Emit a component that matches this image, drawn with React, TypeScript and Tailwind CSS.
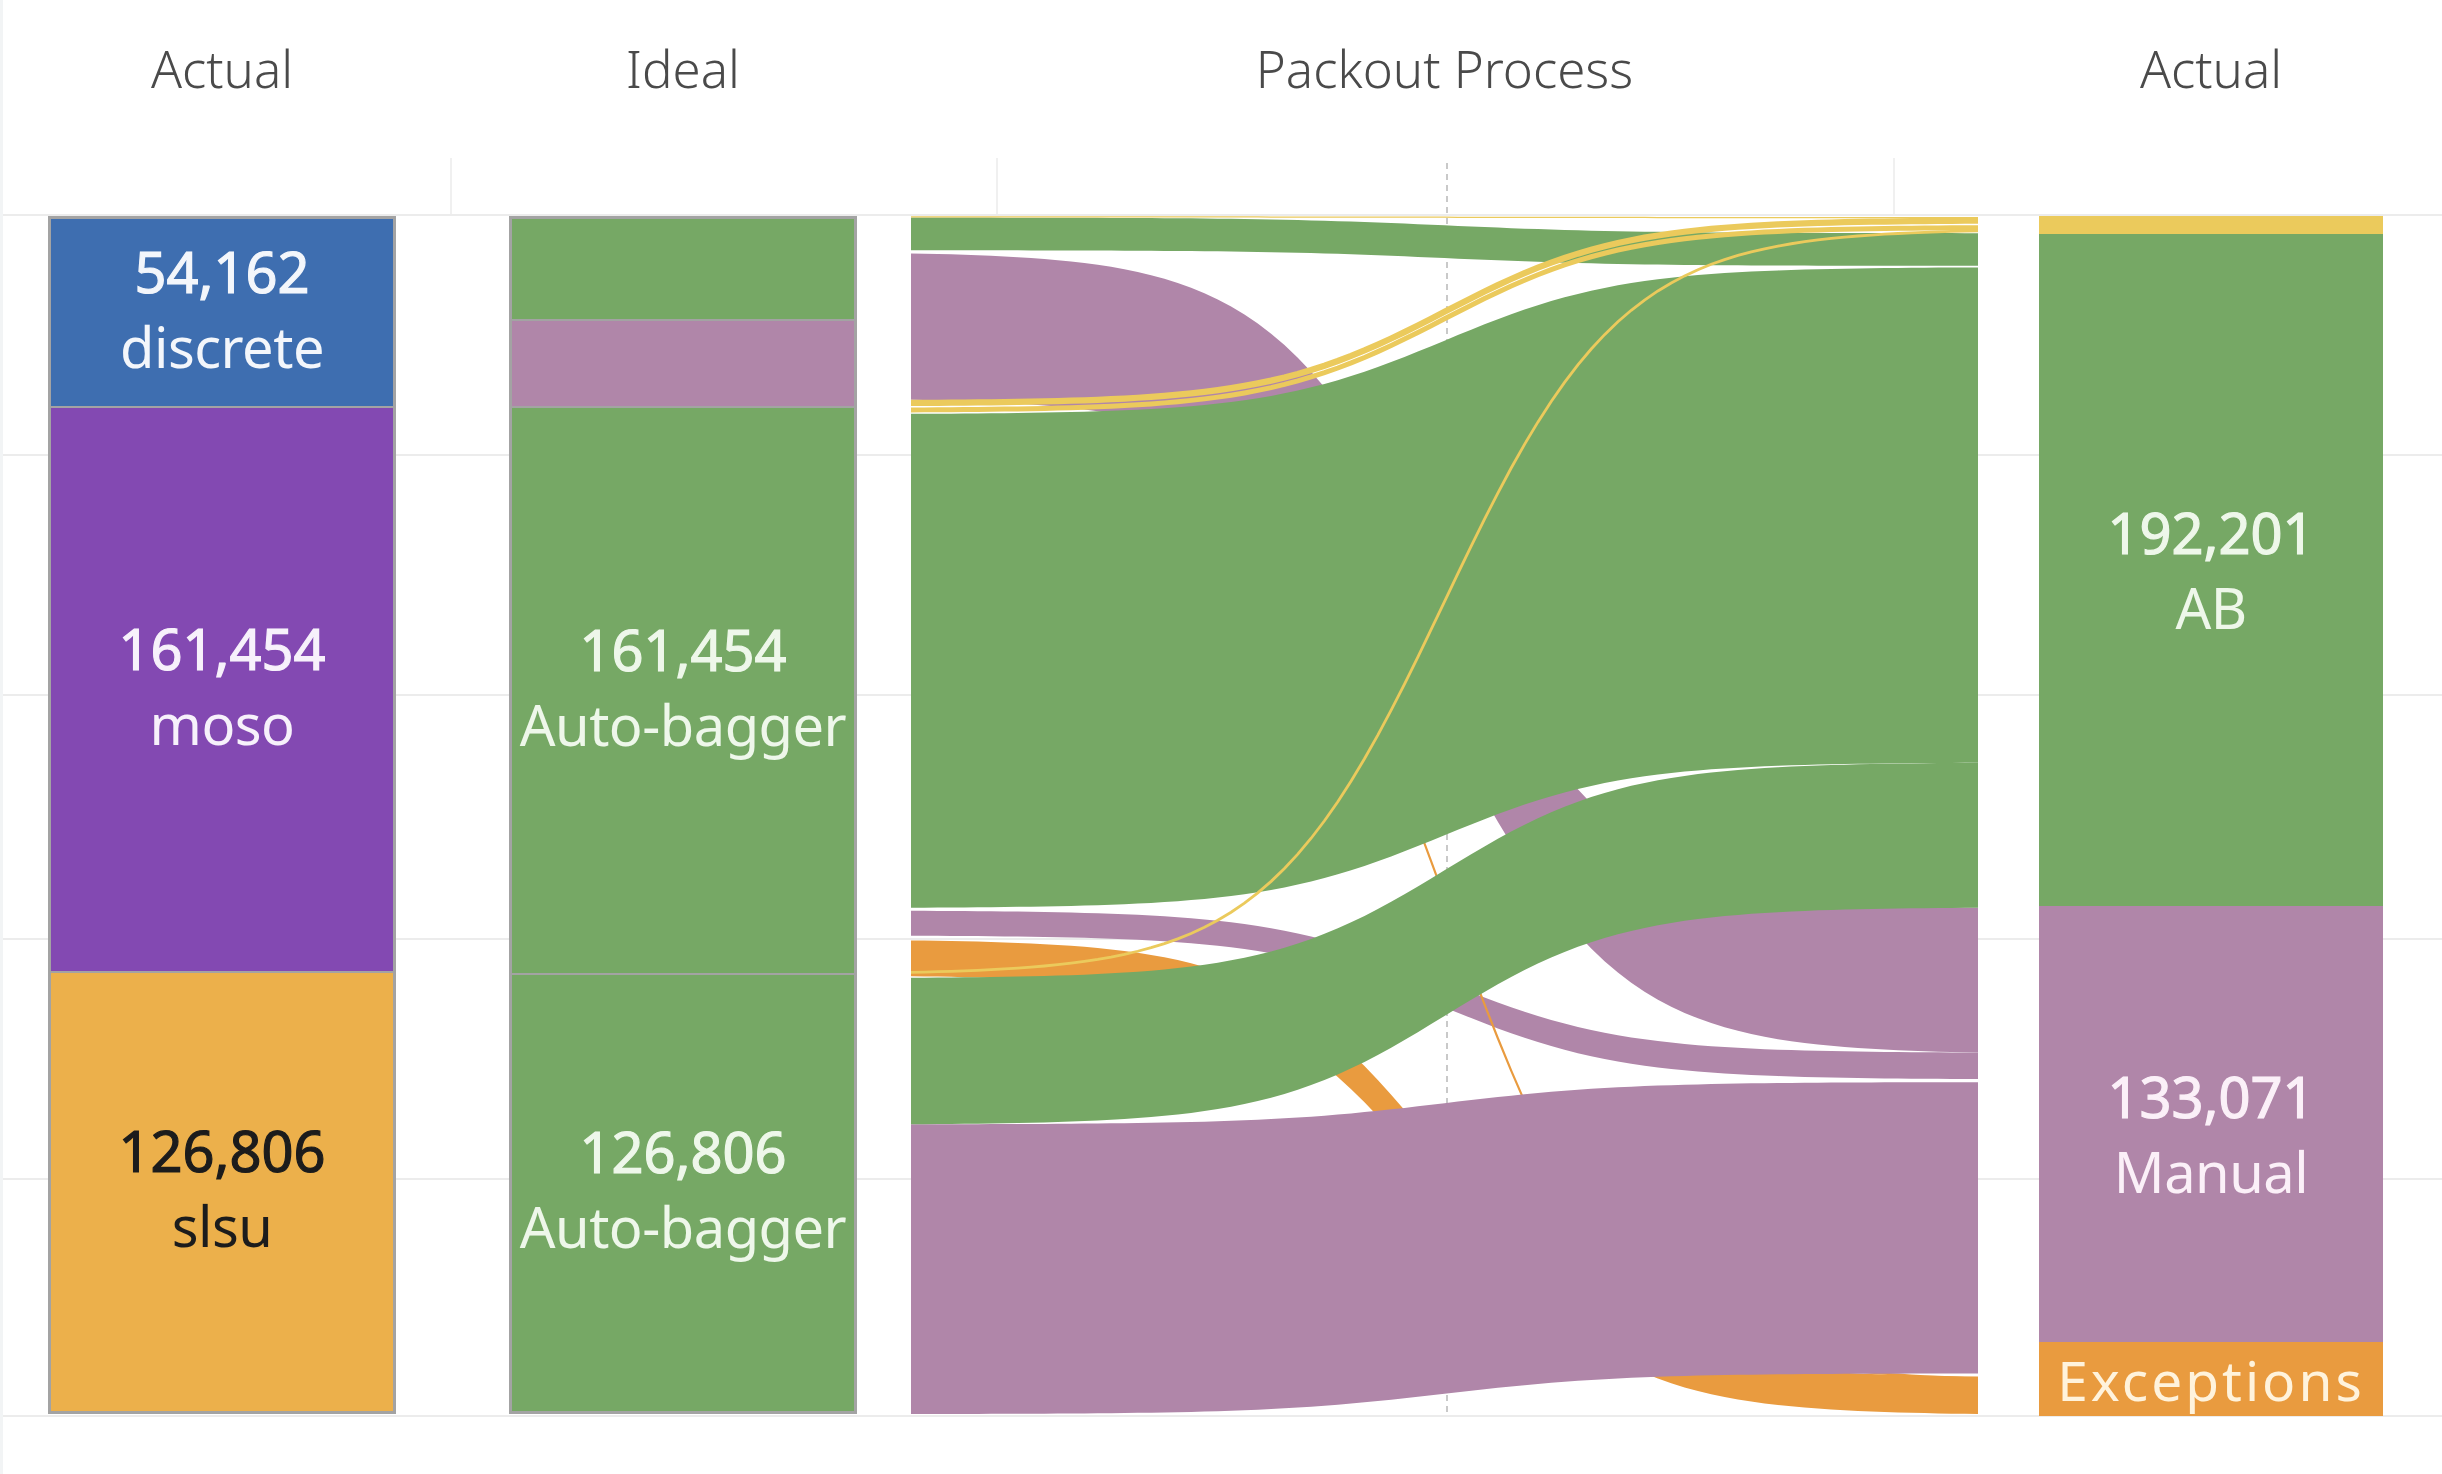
import React from "react";

// sankey coordinates are in a 1568-wide frame, scaled up by the svg viewBox
const X0 = 585;
const XW = 685;

const sig = (t: number) => 1 / (1 + Math.exp(-t));
const ease = (u: number) => (sig(12 * u - 6) - sig(-6)) / (sig(6) - sig(-6));

const edge = (y0: number, y1: number) => {
  const pts: string[] = [];
  for (let i = 0; i <= 80; i++) {
    const u = i / 80;
    pts.push(`${(X0 + XW * u).toFixed(2)},${(y0 + (y1 - y0) * ease(u)).toFixed(2)}`);
  }
  return pts;
};

const band = (l0: number, l1: number, r0: number, r1: number) => {
  const top = edge(l0, r0);
  const bottom = edge(l1, r1).reverse();
  return "M" + top.join("L") + "L" + bottom.join("L") + "Z";
};

const strand = (y0: number, y1: number) => "M" + edge(y0, y1).join("L");

const GREEN = "#76a865";
const MAUVE = "#b086a9";
const ORANGE = "#e99b3f";
const YELLOW = "#ebca5c";

interface seg {
  cls: string;
  num?: string;
  label?: string;
}

const actualSegs: seg[] = [
  { cls: "h-[187px] bg-[#3e6eb0] text-[#f3f6fb] pb-[8px]", num: "54,162", label: "discrete" },
  { cls: "h-[565px] border-t-2 border-[#a3a3a3] bg-[#8349b2] text-[#f7f1fb] pb-[8px]", num: "161,454", label: "moso" },
  { cls: "h-[440px] border-t-2 border-[#a3a3a3] bg-[#ecb04b] text-[#1c1c1c] pb-[8px]", num: "126,806", label: "slsu" },
];

const idealSegs: seg[] = [
  { cls: "h-[100px] bg-[#76a865]" },
  { cls: "h-[87px] border-t-2 border-[#a3a3a3] bg-[#b086a9]" },
  { cls: "h-[567px] border-t-2 border-[#a3a3a3] bg-[#76a865] text-[#eef7ea] pb-[8px]", num: "161,454", label: "Auto-bagger" },
  { cls: "h-[438px] border-t-2 border-[#a3a3a3] bg-[#76a865] text-[#eef7ea] pb-[8px]", num: "126,806", label: "Auto-bagger" },
];

const resultSegs: seg[] = [
  { cls: "h-[18px] bg-[#ebca5c]" },
  { cls: "h-[672px] bg-[#76a865] text-[#eef7ea]", num: "192,201", label: "AB" },
  { cls: "h-[436px] bg-[#b086a9] text-[#fbf0f8] pt-[20px]", num: "133,071", label: "Manual" },
];

const Segment = ({ s }: { s: seg }) => (
  <div className={`flex flex-col items-center justify-center ${s.cls}`}>
    {s.num && (
      <span className="text-[56px] leading-[75px] [-webkit-text-stroke:1.2px_currentColor]">{s.num}</span>
    )}
    {s.label && <span className="text-[56px] leading-[75px] tracking-[-0.5px]">{s.label}</span>}
  </div>
);

const Header = ({ text }: { text: string }) => (
  <div className="h-[216px] pt-[32px] text-center text-[51px] leading-[72px] font-light text-[#4a4a4a]">{text}</div>
);

const Sankey = () => (
  <svg width={1067} height={1198} viewBox="585 139 685 769" preserveAspectRatio="none" className="block">
    {/* flows that sit underneath */}
    <path d={band(163, 257, 583, 676)} fill={MAUVE} />
    <path d={band(585, 601, 676, 693)} fill={MAUVE} />
    <path d={band(604, 627, 884, 908)} fill={ORANGE} />
    <path d={strand(268, 885)} fill="none" stroke={ORANGE} strokeWidth={1.4} />
    <path d={band(722, 908, 695, 882)} fill={MAUVE} />
    <path d={band(628, 722, 490, 583)} fill={GREEN} />
    <path d={band(266, 583, 172, 490)} fill={GREEN} />
    <path d={band(140, 161, 150, 171)} fill={GREEN} />
    {/* thin strands into the top of Actual */}
    <path d={strand(139.6, 140)} fill="none" stroke={YELLOW} strokeWidth={0.8} />
    <path d={strand(259, 142)} fill="none" stroke={YELLOW} strokeWidth={4} />
    <path d={strand(263.5, 146.5)} fill="none" stroke={YELLOW} strokeWidth={3.2} />
    <path d={strand(624.5, 148.5)} fill="none" stroke={YELLOW} strokeWidth={1.8} />
  </svg>
);

const App = () => {
  return (
    <div className="relative w-[2442px] h-[1474px] overflow-hidden bg-white font-['Noto_Sans',sans-serif] border-l-[3px] border-[#f2f4f5]">
      {/* chart backdrop: grid lines and the dashed middle rule */}
      <svg width={2442} height={1474} className="absolute inset-0 pointer-events-none">
        {[215, 455, 695, 939, 1179, 1416].map((y) => (
          <line key={y} x1={0} x2={2442} y1={y} y2={y} stroke="#ececec" strokeWidth={2} />
        ))}
        {[448, 994, 1891].map((x) => (
          <line key={x} x1={x} x2={x} y1={158} y2={214} stroke="#f0f0f0" strokeWidth={2} />
        ))}
        <line x1={1444} x2={1444} y1={163} y2={1414} stroke="#b8b8b8" strokeWidth={1.5} strokeDasharray="6 5" />
      </svg>

      <div className="relative flex pl-[45px]">
        <div className="w-[348px]">
          <Header text="Actual" />
          <div className="flex flex-col w-[348px] h-[1198px] border-[3px] border-[#a3a3a3]">
            {actualSegs.map((s, i) => (
              <Segment s={s} key={i} />
            ))}
          </div>
        </div>

        <div className="w-[348px] ml-[113px]">
          <Header text="Ideal" />
          <div className="flex flex-col w-[348px] h-[1198px] border-[3px] border-[#a3a3a3]">
            {idealSegs.map((s, i) => (
              <Segment s={s} key={i} />
            ))}
          </div>
        </div>

        <div className="w-[1067px] ml-[54px]">
          <Header text="Packout Process" />
          <Sankey />
        </div>

        <div className="w-[344px] ml-[61px]">
          <Header text="Actual" />
          <div className="flex flex-col w-[344px] h-[1200px]">
            {resultSegs.map((s, i) => (
              <Segment s={s} key={i} />
            ))}
            <div className="h-[74px] flex items-center justify-center bg-[#e99b3f] text-[#fff3dc] text-[55px] leading-none tracking-[3px] overflow-visible whitespace-nowrap">
              Exceptions
            </div>
          </div>
        </div>
      </div>
    </div>
  );
};

export default App;
